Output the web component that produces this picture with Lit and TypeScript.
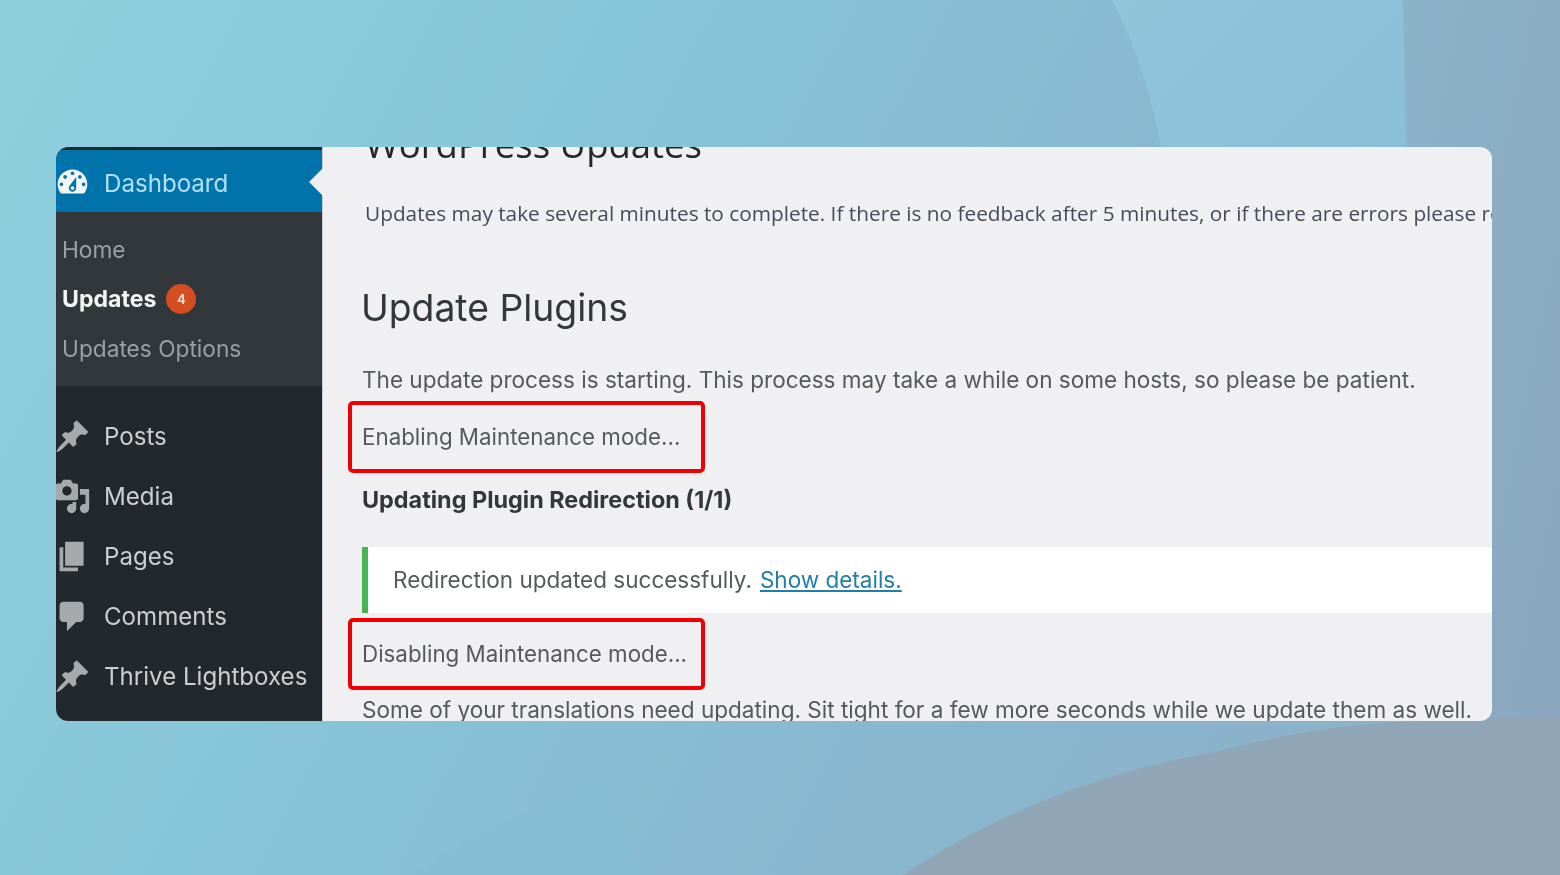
import { LitElement, html, css, svg } from 'lit';
import { customElement } from 'lit/decorators.js';

const ICONS = {
  dashboard: 'M3.76 16h12.48c1.1-1.37 1.76-3.11 1.76-5 0-4.42-3.58-8-8-8s-8 3.58-8 8c0 1.89.66 3.63 1.76 5zM10 4c.55 0 1 .45 1 1s-.45 1-1 1-1-.45-1-1 .45-1 1-1zM6 6c.55 0 1 .45 1 1s-.45 1-1 1-1-.45-1-1 .45-1 1-1zm8 0c.55 0 1 .45 1 1s-.45 1-1 1-1-.45-1-1 .45-1 1-1zm-5.37 5.55L12 7v6c0 1.1-.9 2-2 2s-2-.9-2-2c0-.57.24-1.08.63-1.45zM4 10c.55 0 1 .45 1 1s-.45 1-1 1-1-.45-1-1 .45-1 1-1zm12 0c.55 0 1 .45 1 1s-.45 1-1 1-1-.45-1-1 .45-1 1-1zm-5 3c0-.55-.45-1-1-1s-1 .45-1 1 .45 1 1 1 1-.45 1-1z',
  post: 'M10.44 3.02l1.82-1.82 6.36 6.35-1.83 1.82c-1.05-.68-2.48-.57-3.41.36l-.75.75c-.92.93-1.04 2.35-.35 3.41l-1.83 1.82-2.41-2.41-2.8 2.79c-.42.42-3.38 2.71-3.8 2.29s1.86-3.39 2.28-3.81l2.79-2.79L4.1 9.36l1.83-1.82c1.05.69 2.48.57 3.4-.36l.75-.75c.93-.92 1.05-2.35.36-3.41z',
  media: 'M13 11V4c0-.55-.45-1-1-1h-1.67L9 1H5L3.67 3H2c-.55 0-1 .45-1 1v7c0 .55.45 1 1 1h10c.55 0 1-.45 1-1zM7 4.5c1.38 0 2.5 1.12 2.5 2.5S8.38 9.5 7 9.5 4.5 8.38 4.5 7 5.62 4.5 7 4.5zM14 6h5v10.5c0 1.38-1.12 2.5-2.5 2.5S14 17.88 14 16.5s1.12-2.5 2.5-2.5c.17 0 .34.02.5.05V9h-3V6zm-4 8.05V13h2v3.5c0 1.38-1.12 2.5-2.5 2.5S7 17.88 7 16.5 8.12 14 9.5 14c.17 0 .34.02.5.05z',
  page: 'M6 15V2h10v13H6zm-1 1h8v2H3V5h2v11z',
  comment: 'M5 2h9c1.1 0 2 .9 2 2v7c0 1.1-.9 2-2 2h-2l-5 5v-5H5c-1.1 0-2-.9-2-2V4c0-1.1.9-2 2-2z',
};

const MENU: [keyof typeof ICONS, string][] = [
  ['post', 'Posts'],
  ['media', 'Media'],
  ['page', 'Pages'],
  ['comment', 'Comments'],
  ['post', 'Thrive Lightboxes'],
];

const icon = (name: keyof typeof ICONS) => html`<svg class="icon" viewBox="0 0 20 20" fill="currentColor">
  ${svg`<path fill-rule="evenodd" d=${ICONS[name]}></path>`}
</svg>`;

@customElement('app-root')
export class AppRoot extends LitElement {
  static styles = css`
    :host {
      display: block;
      position: relative;
      width: 1560px;
      height: 875px;
      overflow: hidden;
      box-sizing: border-box;
      padding: 147px 68px 154px 56px;
      font-family: Inter, "Liberation Sans", sans-serif;
      background: linear-gradient(118deg, #8fd0dc 0%, #87c5d8 32%, #88b8cf 62%, #8caec6 100%);
    }
    .backdrop {
      position: absolute;
      inset: 0;
      width: 1560px;
      height: 875px;
    }
    .card {
      position: relative;
      display: flex;
      height: 574px;
      border-radius: 12px;
      overflow: hidden;
      background: #f0f0f2;
    }
    .side {
      flex: none;
      width: 267px;
      box-sizing: border-box;
      padding-top: 3px;
      background: #23282d;
      border-right: 1px solid #c9ced3;
      position: relative;
      filter: blur(0.6px);
    }
    .current {
      box-sizing: border-box;
      height: 62px;
      padding-top: 2px;
      display: flex;
      align-items: center;
      gap: 13px;
      background: #0073aa;
      color: #b0e0f3;
      font-size: 24.1px;
    }
    .current span {
      padding-top: 2px;
    }
    .arrow {
      position: absolute;
      right: -1px;
      top: 21px;
      width: 14px;
      height: 28px;
      background: #f0f0f2;
      clip-path: polygon(100% 0, 0 50%, 100% 100%);
    }
    .current .icon {
      color: #f1f6f9;
    }
    .icon {
      flex: none;
      width: 37px;
      height: 37px;
      margin-left: -2px;
    }
    .sub {
      height: 174px;
      box-sizing: border-box;
      padding: 13px 0 12px 6px;
      display: grid;
      grid-auto-rows: 49.5px;
      align-items: center;
      background: #32373c;
      color: #9da0a3;
      font-size: 22.7px;
    }
    .sub .on {
      display: flex;
      align-items: center;
      gap: 10px;
      color: #f4f5f5;
      font-weight: 700;
      font-size: 23.1px;
    }
    .badge {
      width: 30px;
      height: 30px;
      border-radius: 50%;
      display: grid;
      place-items: center;
      background: #d54e21;
      color: #f3d9cf;
      font-size: 13px;
      font-weight: 700;
    }
    .menu {
      padding-top: 20px;
      display: grid;
      grid-auto-rows: 60px;
    }
    .menu div {
      display: flex;
      align-items: center;
      gap: 13px;
      color: #ccced0;
      font-size: 24.1px;
      white-space: nowrap;
    }
    .menu .icon {
      color: #a7aaad;
    }
    .main {
      flex: 1;
      min-width: 0;
      padding-left: 39px;
      color: #55595e;
      font-size: 22.55px;
      line-height: 30px;
      white-space: nowrap;
      overflow: hidden;
      filter: blur(0.5px);
    }
    h1,
    h2,
    p {
      margin: 0;
      font-weight: 400;
    }
    h1 {
      margin: -23px 0 0 3px;
      font: 400 36.5px/40px "Open Sans", sans-serif;
      color: #23282d;
    }
    .intro {
      margin: 34px 0 0 3px;
      font-family: "Open Sans", sans-serif;
      font-size: 20.8px;
      color: #444b5c;
    }
    h2 {
      margin: 55px 0 0 -1px;
      font-size: 37.3px;
      line-height: 50px;
      color: #32373c;
    }
    .start {
      margin-top: 32px;
    }
    .mark {
      box-sizing: border-box;
      width: 357px;
      height: 72px;
      margin-left: -14px;
      padding-left: 10px;
      display: flex;
      align-items: center;
      font-size: 22.35px;
      border: 4px solid #f00000;
      border-radius: 5px;
    }
    .m1 {
      margin-top: 6px;
    }
    .m2 {
      margin-top: 5px;
    }
    .bold {
      margin-top: 12px;
      font-weight: 700;
      font-size: 23.4px;
      color: #32373c;
    }
    .notice {
      box-sizing: border-box;
      height: 66px;
      margin-top: 32px;
      padding-left: 25px;
      display: flex;
      align-items: center;
      gap: 8px;
      font-size: 22.5px;
      background: #fff;
      border-left: 6px solid #46b450;
    }
    .notice a {
      color: #1f7fa6;
      text-decoration: underline;
    }
    .last {
      margin-top: 5px;
    }
  `;

  render() {
    return html`
      <svg class="backdrop" viewBox="0 0 1560 875">
        <defs>
          <linearGradient id="pane" x1="0" y1="0" x2="1" y2="1">
            <stop offset="0" stop-color="#8fc6da" />
            <stop offset="1" stop-color="#88bcd6" />
          </linearGradient>
          <linearGradient id="edge" x1="0" y1="0" x2="1" y2="1">
            <stop offset="0" stop-color="#8ab3c8" />
            <stop offset="1" stop-color="#8ba6bf" />
          </linearGradient>
        </defs>
        <path d="M1112 0C1135 45 1152 95 1161 147L1180 300H1409L1403 0Z" fill="url(#pane)" />
        <path d="M1403 0L1409 147L1420 720L1560 760V0Z" fill="url(#edge)" />
        <path d="M903 875C1000 810 1110 770 1215 752C1280 735 1340 725 1400 722L1560 716V875Z" fill="#90a6b7" />
        <path d="M415 875C470 835 540 805 607 782L640 875Z" fill="#85bdd5" />
      </svg>
      <div class="card">
        <nav class="side">
          <div class="current">${icon('dashboard')}<span>Dashboard</span><i class="arrow"></i></div>
          <div class="sub">
            <div>Home</div>
            <div class="on">Updates <span class="badge">4</span></div>
            <div>Updates Options</div>
          </div>
          <div class="menu">
            ${MENU.map(([name, label]) => html`<div>${icon(name)}<span>${label}</span></div>`)}
          </div>
        </nav>
        <main class="main">
          <h1>WordPress Updates</h1>
          <p class="intro">Updates may take several minutes to complete. If there is no feedback after 5 minutes, or if there are errors please refer to the</p>
          <h2>Update Plugins</h2>
          <p class="start">The update process is starting. This process may take a while on some hosts, so please be patient.</p>
          <div class="mark m1">Enabling Maintenance mode...</div>
          <p class="bold">Updating Plugin Redirection (1/1)</p>
          <div class="notice"><span>Redirection updated successfully.</span><a href="#">Show details.</a></div>
          <div class="mark m2">Disabling Maintenance mode...</div>
          <p class="last">Some of your translations need updating. Sit tight for a few more seconds while we update them as well.</p>
        </main>
      </div>
    `;
  }
}
